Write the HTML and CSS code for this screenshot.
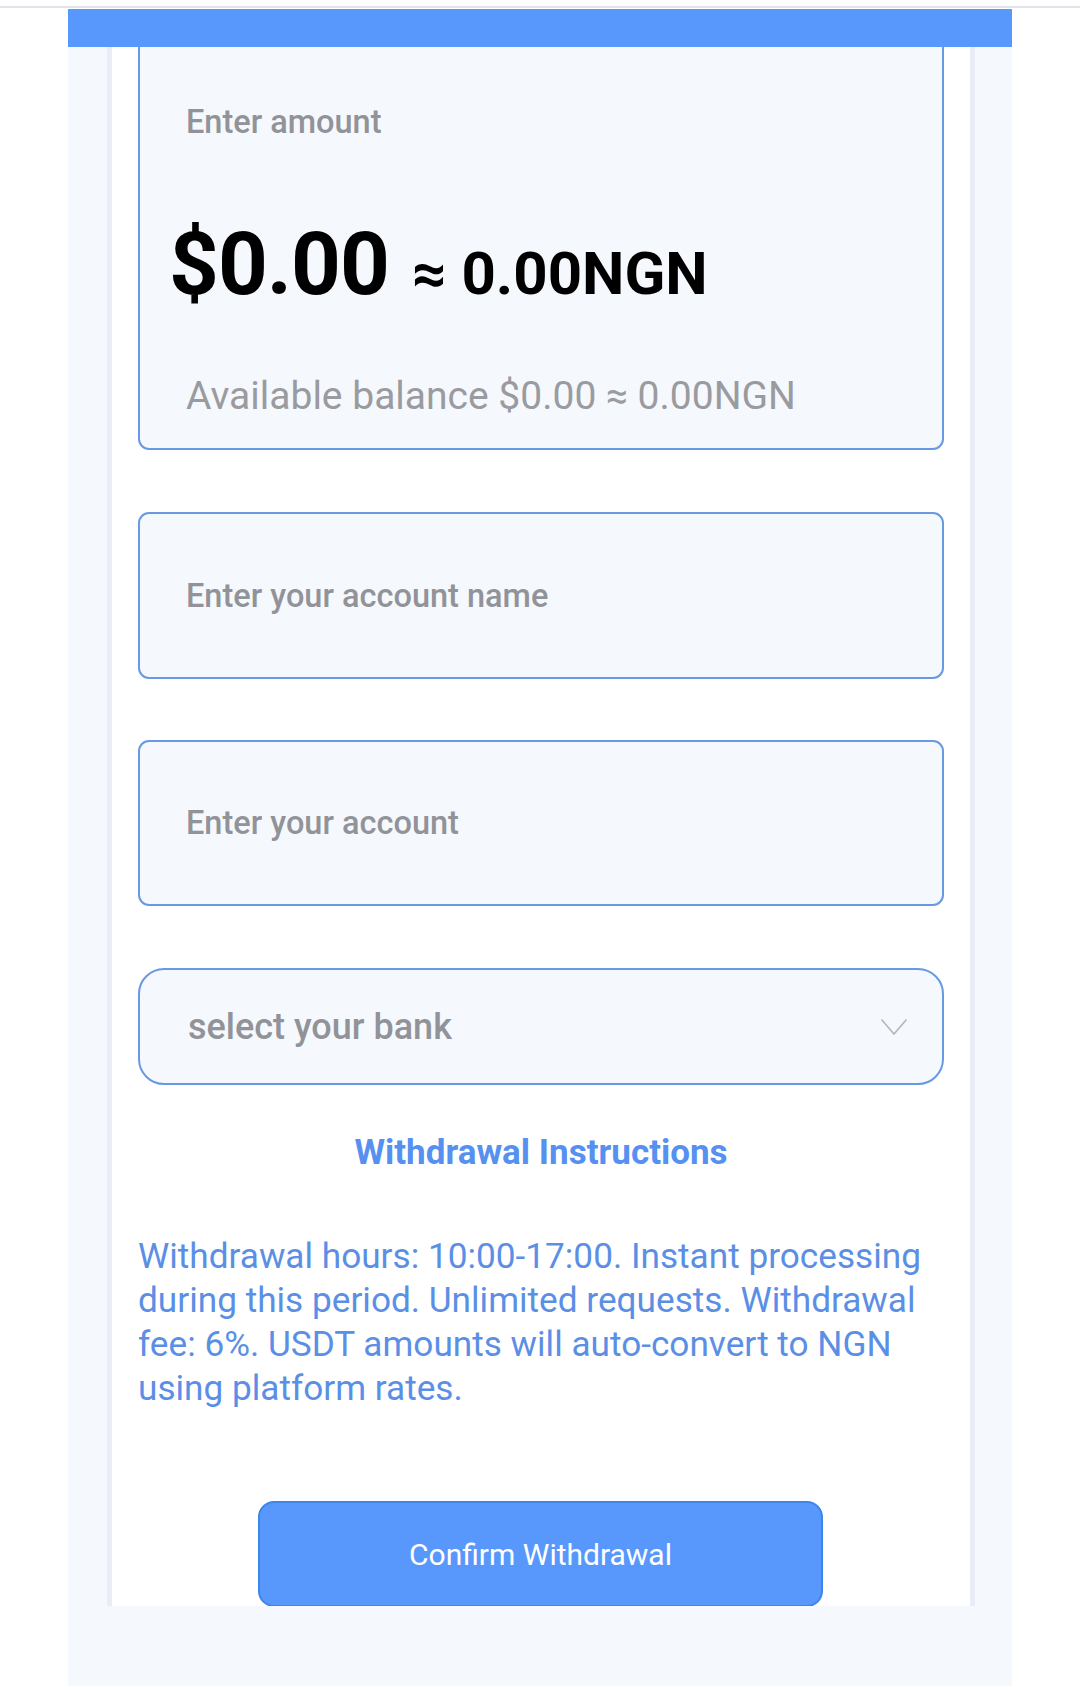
FILE: index.html
```html
<!DOCTYPE html>
<html>
<head>
<meta charset="utf-8">
<link rel="stylesheet" href="styles.css">
</head>
<body>
<div class="topline"></div>
<div class="page">
  <div class="header"></div>
  <div class="panel">
    <div class="card amount-card">
      <div class="label">Enter amount</div>
      <div class="amount-row"><span class="usd">$0.00</span><span class="ngn">≈ 0.00NGN</span></div>
      <div class="balance">Available balance $0.00 ≈ 0.00NGN</div>
    </div>
    <div class="card field"><span class="placeholder">Enter your account name</span></div>
    <div class="card field"><span class="placeholder">Enter your account</span></div>
    <div class="card select">
      <span class="select-text">select your bank</span>
      <svg class="chevron" width="28" height="20" viewBox="0 0 28 20"><path d="M1.5 2.5 L14 17 L26.5 2.5" fill="none" stroke="#b3b6bb" stroke-width="1.6"/></svg>
    </div>
    <div class="instr-title">Withdrawal Instructions</div>
    <p class="instr">Withdrawal hours: 10:00-17:00. Instant processing during this period. Unlimited requests. Withdrawal fee: 6%. USDT amounts will auto-convert to NGN using platform rates.</p>
    <div class="btn-wrap"><button class="confirm">Confirm Withdrawal</button></div>
  </div>
</div>
</body>
</html>
```
FILE: styles.css
```css
html, body {
  margin: 0;
  padding: 0;
  background: #ffffff;
  font-family: Roboto, "Liberation Sans", sans-serif;
}
.topline {
  height: 2px;
  margin-top: 6px;
  background: #e1e5eb;
}
.page {
  position: relative;
  width: 944px;
  height: 1677px;
  margin: 1px 0 0 68px;
  background: #f5f8fd;
}
.header {
  position: absolute;
  top: 0;
  left: 0;
  right: 0;
  height: 38px;
  background: #5898fd;
  z-index: 2;
}
.panel {
  margin-left: 39px;
  width: 868px;
  height: 1597px;
  border-left: 5px solid #e9eef6;
  border-right: 5px solid #e9eef6;
  background: #ffffff;
  overflow: hidden;
  padding: 0 26px;
  box-sizing: border-box;
}
.card {
  border: 2px solid #6899e2;
  border-radius: 11px;
  background: #f5f8fd;
  box-sizing: border-box;
}
.amount-card {
  padding: 93px 0 32px 46px;
  border-top-left-radius: 0;
  border-top-right-radius: 0;
}
.label {
  font-size: 32.5px;
  line-height: 36px;
  font-weight: 500;
  color: #919399;
}
.amount-row {
  margin: 80px 0 0 -17px;
  display: flex;
  align-items: baseline;
  height: 88px;
  line-height: 88px;
}
.usd {
  font-size: 87px;
  font-weight: 700;
  color: #000;
  letter-spacing: -1px;
}
.ngn {
  font-size: 60px;
  font-weight: 700;
  color: #000;
  margin-left: 23px;
}
.balance {
  margin-top: 68px;
  font-size: 39px;
  line-height: 40px;
  color: #9a9ba0;
}
.field {
  margin-top: 62px;
  height: 167px;
  display: flex;
  align-items: center;
  padding-left: 46px;
}
.field + .field {
  margin-top: 61px;
  height: 166px;
}
.placeholder {
  font-size: 32.5px;
  font-weight: 500;
  color: #919399;
}
.select {
  margin-top: 62px;
  height: 117px;
  border-radius: 26px;
  display: flex;
  align-items: center;
  justify-content: space-between;
  padding: 0 34px 0 48px;
}
.select-text {
  font-size: 36px;
  font-weight: 500;
  color: #919399;
}
.chevron {
  display: block;
}
.instr-title {
  margin-top: 48px;
  text-align: center;
  font-size: 35px;
  line-height: 40px;
  font-weight: 700;
  color: #5690f0;
}
.instr {
  margin: 61px 0 0 0;
  font-size: 35.2px;
  line-height: 44px;
  color: #5b8fe6;
}
.btn-wrap {
  margin-top: 91px;
  display: flex;
  justify-content: center;
}
.confirm {
  margin-left: -1px;
  width: 565px;
  height: 106px;
  border: 2px solid #3a86ea;
  border-radius: 16px;
  background: #5898fd;
  color: #ffffff;
  font-family: Roboto, "Liberation Sans", sans-serif;
  font-size: 30px;
}
```
